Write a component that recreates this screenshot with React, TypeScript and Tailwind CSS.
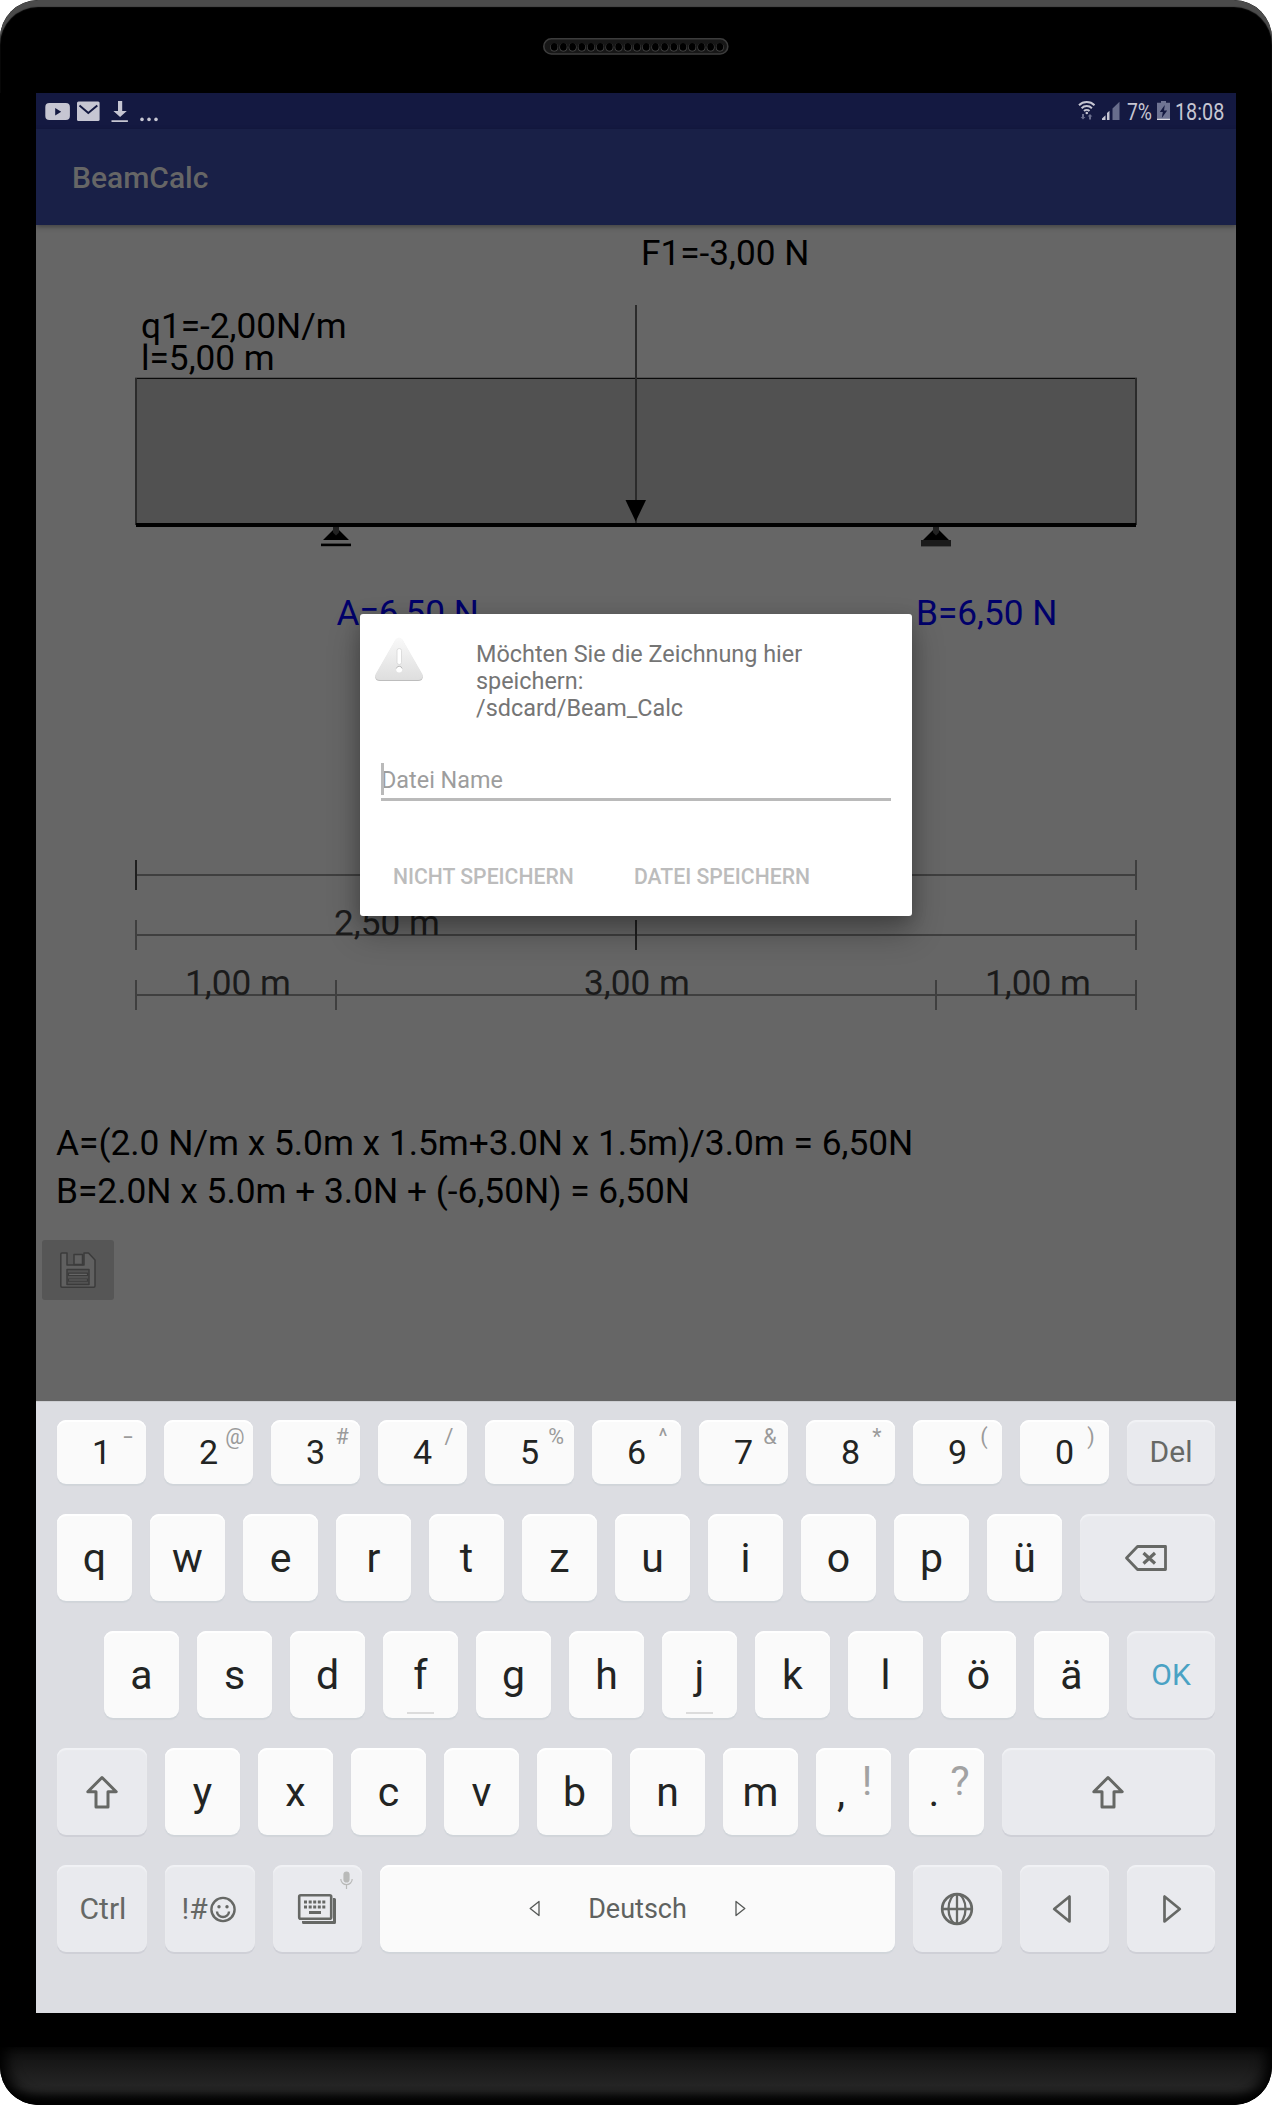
import React from "react";

const HOLES = Array.from({ length: 19 }, (_, i) => i);
const DIGITS: [string, string][] = [
  ["1", "-"], ["2", "@"], ["3", "#"], ["4", "/"], ["5", "%"],
  ["6", "^"], ["7", "&"], ["8", "*"], ["9", "("], ["0", ")"],
];
const ROW_Q = ["q", "w", "e", "r", "t", "z", "u", "i", "o", "p", "ü"];
const ROW_A = ["a", "s", "d", "f", "g", "h", "j", "k", "l", "ö", "ä"];
const ROW_Y = ["y", "x", "c", "v", "b", "n", "m"];

function Key({ className = "", fn = false, children }: { className?: string; fn?: boolean; children?: React.ReactNode }) {
  const tone = fn
    ? "bg-[#e9eaee] text-[#666865] shadow-[inset_0_2px_1px_#f1f2f5,0_2px_0_#cfd0d7]"
    : "bg-[#fafafa] text-[#222423] shadow-[inset_0_2px_1px_#ffffff,0_1px_0_#d0d5da,0_2px_1px_#d2d5da]";
  return (
    <div className={`relative flex h-full shrink-0 items-center justify-center rounded-[9px] leading-none ${tone} ${className}`}>
      {children}
    </div>
  );
}

function Letter({ c }: { c: string }) {
  return (
    <Key className="w-[75px] pt-[2px] text-[41px]">
      {c}
      {(c === "f" || c === "j") && <span className="absolute bottom-[4px] h-[2px] w-[27px] bg-[#dcdcdc]" />}
    </Key>
  );
}

function ShiftIcon() {
  return (
    <svg className="mr-px" width="34" height="34" viewBox="0 0 34 34" fill="none" stroke="#666865" strokeWidth="3" strokeLinejoin="round">
      <path d="M17 2.5 31.2 16.8H23V32H11V16.8H2.8Z" />
    </svg>
  );
}

function StatusBar() {
  return (
    <div className="flex h-9 items-center justify-between bg-[#141941] pl-[9px] pr-3 text-[#c6c6d2]">
      <svg width="116" height="36" viewBox="0 0 116 36" fill="#c6c6d2">
        <rect x="0.3" y="10" width="24.6" height="17" rx="4" />
        <path d="M10.2 15v7.4l6-3.7Z" fill="#141941" />
        <rect x="32" y="8.5" width="22.6" height="19.5" rx="1.5" />
        <path d="M34.5 12.5 43.3 20l9-7.5" fill="none" stroke="#141941" strokeWidth="2" />
        <path d="M73 8h4.2v10h4.6l-6.7 6-6.7-6H73ZM66.5 27.2h16.4v1.8H66.5Z" />
        <circle cx="97" cy="26.4" r="1.8" /><circle cx="104" cy="26.4" r="1.8" /><circle cx="111" cy="26.4" r="1.8" />
      </svg>
      <div className="flex items-center">
        <svg width="44" height="36" viewBox="0 0 44 36" fill="none">
          <g stroke="#c6c6d2" strokeWidth="2">
            <path d="M1 12.2a11 11 0 0 1 15.500 0M3.600 15.200a7.400 7.400 0 0 1 10.300 0M6 18a4 4 0 0 1 5.500 0" />
          </g>
          <circle cx="8.8" cy="20" r="1.3" fill="#c6c6d2" />
          <path d="M4 21h2v3h1.400L5 26.500 2.600 24H4ZM11 26.500h2v-3h1.400L12 21l-2.400 2.500H11Z" fill="#6b6f8e" />
          <path d="M24 27v-1.500l3.500-3.200V27ZM29 27v-7l2.500-2.300V27Z" fill="#c6c6d2" />
          <path d="M34.500 27V15.500l7-6.800V27Z" fill="#686d8c" />
        </svg>
        <span className="ml-[5px] w-[27px] origin-left scale-x-[0.84] whitespace-nowrap pt-[3px] text-[23px] leading-[33px]">7%</span>
        <svg className="ml-[3px] mr-[5px]" width="13" height="36" viewBox="0 0 13 36">
          <path d="M4 8h5v1.800h4V27H0V9.800h4Z" fill="#6f7493" />
          <path d="M7.800 12 2.800 19h3L4.800 25 10.200 17.500H7Z" fill="#141941" />
          <path d="M0 25.800h13V27H0Z" fill="#d8d8e0" />
        </svg>
        <span className="w-[49px] origin-left scale-x-[0.86] whitespace-nowrap pt-[3px] text-[23px] leading-[33px]">18:08</span>
      </div>
    </div>
  );
}

function BeamDiagram() {
  return (
    <svg className="block" width="1200" height="893" viewBox="36 225 1200 893" fontSize="35.2" fill="#000">
      <rect x="136" y="378" width="1000" height="147" fill="#515151" />
      <path d="M135 377.500H1137" stroke="#505050" />
      <path d="M135 378.500H1137" stroke="#0a0a0a" />
      <path d="M136 378V525M1136 378V525" stroke="#2b2b2b" strokeWidth="2" />
      <path d="M636 305V523" stroke="#2b2b2b" strokeWidth="2" />
      <path d="M625.500 500H646L635.700 521.500Z" />
      <path d="M136 525H1136" stroke="#000" strokeWidth="4" />

      <path d="M336 527 323 540H349ZM936 527 923 540H949Z" />
      <path d="M333 527h6v5.500l-3 3-3-3ZM933 527h6v5.500l-3 3-3-3Z" fill="#222" />
      <rect x="321" y="543.600" width="30" height="2.600" />
      <rect x="921" y="540" width="30" height="6.400" fill="#1b1b1b" />

      <g stroke="#3f3f3f" strokeWidth="2">
        <path d="M136 875H1136M136 935H1136M136 995H1136" />
        <path d="M1136 860V890M136 920V950M1136 920V950M136 980V1010M336 980V1010M936 980V1010M1136 980V1010" />
        <path d="M136 860V890M636 920V950" stroke="#1f1f1f" />
      </g>

      <text x="641" y="265">F1=-3,00 N</text>
      <text x="141" y="338">q1=-2,00N/m</text>
      <text x="141" y="370">l=5,00 m</text>
      <g fill="#00006a">
        <text x="336.500" y="625">A=6,50 N</text>
        <text x="916" y="625">B=6,50 N</text>
      </g>
      <g fill="#1b1b1b">
        <text x="334" y="935">2,50 m</text>
        <text x="185" y="995">1,00 m</text>
        <text x="584" y="995">3,00 m</text>
        <text x="985" y="995">1,00 m</text>
      </g>
    </svg>
  );
}

function Dialog() {
  return (
    <div className="absolute left-[324px] top-[521px] flex h-[302px] w-[552px] flex-col rounded-[3px] bg-white shadow-[0_16px_32px_rgba(0,0,0,0.3),0_4px_16px_rgba(0,0,0,0.16)]">
      <div className="flex h-[123px] pl-[14px] pt-[23px]">
        <svg width="50" height="46" viewBox="0 0 50 46">
          <defs>
            <linearGradient id="warn" x1="0" y1="0" x2="0" y2="1">
              <stop offset="0" stopColor="#f9f9f9" />
              <stop offset="1" stopColor="#dedede" />
            </linearGradient>
          </defs>
          <path d="M21.500 3.500Q25 -.5 28.500 3.500L48.300 38Q50 43.500 44 44H6Q0 43.500 1.700 38Z" fill="#bdbdbd" />
          <path d="M21.500 2.500Q25 -1.500 28.500 2.500L48.300 37Q50 42.500 44 43H6Q0 42.500 1.700 37Z" fill="url(#warn)" />
          <rect x="23" y="11.500" width="4.500" height="16" rx="2.200" fill="#fff" stroke="#d5d5d5" strokeWidth=".8" />
          <circle cx="25.200" cy="32.500" r="3" fill="#fff" />
          <path d="M22.300 31.500a3 3 0 0 1 5.800 0" fill="none" stroke="#bbb" />
        </svg>
        <p className="ml-[52px] pt-[4px] text-[23.4px] leading-[27px] text-[#757575]">
          Möchten Sie die Zeichnung hier<br />speichern:<br />/sdcard/Beam_Calc
        </p>
      </div>
      <div className="relative mx-[21px] mt-[21px] h-[43px] border-b-[3px] border-[#bababa]">
        <span className="absolute left-0 top-[5px] h-8 w-[3px] bg-[#bababa]" />
        <span className="block pt-[9px] text-[23.4px] leading-[27px] text-[#9d9d9d]">Datei Name</span>
      </div>
      <div className="mt-[63px] flex pl-[33px] text-[21.2px] font-medium leading-[26px] text-[#bcbcbc]">
        <span className="w-[241px]">NICHT SPEICHERN</span>
        <span>DATEI SPEICHERN</span>
      </div>
    </div>
  );
}

function Keyboard() {
  return (
    <div className="flex h-[612px] flex-col gap-[30px] border-t border-[#cdced2] bg-[#dcdde2] pl-[21px] pt-[18px]">
      <div className="flex h-[64px] gap-[18px]">
        {DIGITS.map(([d, s]) => (
          <Key key={d} className="w-[89px] text-[34px]">
            {d}
            <span className={`absolute left-[51px] top-[5px] w-10 text-center text-[21.500px] leading-6 text-[#9b9b9b] ${s === "-" ? "scale-x-[1.6]" : ""}`}>{s}</span>
          </Key>
        ))}
        <Key fn className="w-[88px] text-[30px]">Del</Key>
      </div>
      <div className="flex h-[87px] gap-[18px]">
        {ROW_Q.map((c) => <Letter key={c} c={c} />)}
        <Key fn className="w-[135px]">
          <svg className="mr-[3px]" width="44" height="30" viewBox="0 0 44 30" fill="none" stroke="#666865" strokeWidth="2.800" strokeLinejoin="round">
            <path d="M2.500 15 13.500 3.500H41.500V26.500H13.500Z" />
            <path d="M19.500 10 31 20.500M31 10 19.500 20.500" strokeWidth="3.200" />
          </svg>
        </Key>
      </div>
      <div className="flex h-[87px] gap-[18px] pl-[47px]">
        {ROW_A.map((c) => <Letter key={c} c={c} />)}
        <Key fn className="w-[88px] text-[30px]"><span className="text-[#4aa2c4]">OK</span></Key>
      </div>
      <div className="flex h-[87px] gap-[18px]">
        <Key fn className="w-[90px]"><ShiftIcon /></Key>
        {ROW_Y.map((c) => <Letter key={c} c={c} />)}
        {[[",", "!"], [".", "?"]].map(([c, s]) => (
          <Key key={c} className="w-[75px] pt-[2px] text-[41px]">
            <span className="mr-auto w-[50px] text-center">{c}</span>
            <span className="absolute left-[31px] top-[13px] w-10 text-center text-[#a2a2a2]">{s}</span>
          </Key>
        ))}
        <Key fn className="w-[213px]"><ShiftIcon /></Key>
      </div>
      <div className="flex h-[87px] gap-[18px]">
        <Key fn className="w-[90px] pl-[2px] text-[30px]">Ctrl</Key>
        <Key fn className="w-[90px] text-[30px]">
          !#
          <svg className="ml-px mr-[2px]" width="28" height="28" viewBox="0 0 28 28" fill="none" stroke="#666865" strokeWidth="2.400">
            <circle cx="14" cy="14.500" r="11.600" />
            <path d="M8 16.500a6 5.500 0 0 0 12 0" />
            <circle cx="10" cy="11.800" r="1.700" fill="#666865" stroke="none" />
            <circle cx="18" cy="11.800" r="1.700" fill="#666865" stroke="none" />
          </svg>
        </Key>
        <Key fn className="w-[89px]">
          <svg className="mr-px" width="40" height="32" viewBox="0 0 40 32" fill="#666865">
            <rect x="2.200" y="2.200" width="32" height="23.500" rx="1.500" fill="none" stroke="#666865" strokeWidth="2.600" />
            <path d="M36 6.500h1.500V29.500H6.500V28" fill="none" stroke="#666865" strokeWidth="3" strokeLinejoin="round" />
            {[7, 11.7, 16.2, 20.8, 25.3].map((x) => (
              <g key={x}><rect x={x} y="7.500" width="3" height="3" /><rect x={x} y="12.500" width="3" height="3" /></g>
            ))}
            <rect x="12" y="18" width="12" height="3" />
          </svg>
          <svg className="absolute left-[67px] top-[6px]" width="13" height="19" viewBox="0 0 13 19" fill="none" stroke="#b9bab9" strokeWidth="1.200">
            <rect x="3.400" y=".5" width="6.200" height="11" rx="3.100" fill="#b9bab9" stroke="none" />
            <path d="M.8 8a5.700 5.700 0 0 0 11.400 0M6.500 13.500V18" />
          </svg>
        </Key>
        <Key className="w-[515px] gap-[48px] text-[27px]">
          <svg width="11" height="17" viewBox="0 0 11 17" fill="none" stroke="#555856" strokeWidth="1.300" strokeLinejoin="round"><path d="M10 1.500V15.500L1.200 8.500Z" /></svg>
          <span className="pt-[2px] text-[#5f6260]">Deutsch</span>
          <svg width="11" height="17" viewBox="0 0 11 17" fill="none" stroke="#555856" strokeWidth="1.300" strokeLinejoin="round"><path d="M1 1.500V15.500L9.800 8.500Z" /></svg>
        </Key>
        <Key fn className="w-[89px]">
          <svg className="mr-[1px]" width="34" height="34" viewBox="0 0 34 34" fill="none" stroke="#666865" strokeWidth="2.300">
            <circle cx="17" cy="17" r="14.800" strokeWidth="2.700" />
            <ellipse cx="17" cy="17" rx="8.500" ry="14.800" />
            <path d="M17 2V32M2 17H32" />
          </svg>
        </Key>
        <Key fn className="w-[89px]">
          <svg className="mr-[5px]" width="20" height="30" viewBox="0 0 20 30" fill="none" stroke="#666865" strokeWidth="2.700" strokeLinejoin="round"><path d="M17.500 2.500V27.500L2.200 15Z" /></svg>
        </Key>
        <Key fn className="w-[88px]">
          <svg className="ml-0.5" width="20" height="30" viewBox="0 0 20 30" fill="none" stroke="#666865" strokeWidth="2.700" strokeLinejoin="round"><path d="M2.500 2.500V27.500L17.800 15Z" /></svg>
        </Key>
      </div>
    </div>
  );
}

export default function App() {
  return (
    <div className="h-[2105px] w-[1272px] bg-white font-['Roboto',sans-serif]">
      <div className="flex h-full flex-col overflow-hidden rounded-[38px] bg-black">
        <div className="flex h-[93px] shrink-0 justify-center rounded-t-[38px] pt-[38px] shadow-[inset_0_7px_1px_#4b4b4b]">
          <svg width="186" height="17" viewBox="0 0 186 17">
            <rect x=".8" y=".8" width="184" height="15.200" rx="7.600" fill="#171717" stroke="#3c3c3c" strokeWidth="1.600" />
            {HOLES.map((i) => (
              <g key={i}>
                <ellipse cx={11.2 + i * 9.2} cy="9.400" rx="3.900" ry="4.100" fill="#4c4c4c" />
                <ellipse cx={11.2 + i * 9.2} cy="8.800" rx="3.400" ry="3.900" fill="#000" />
              </g>
            ))}
          </svg>
        </div>
        <div className="relative mx-9 h-[1920px] shrink-0 bg-[#666]">
          <StatusBar />
          <div className="relative flex h-24 items-center bg-[#192047] pl-9 pt-[2px] text-[30px] font-medium leading-none text-[#666] shadow-[0_2px_5px_rgba(0,0,0,0.35)]">BeamCalc</div>
          <div className="h-[1176px]">
            <BeamDiagram />
            <div className="pl-5 pt-px text-[35.3px] leading-[48px] text-black">
              <p>A=(2.0 N/m x 5.0m x 1.5m+3.0N x 1.5m)/3.0m = 6,50N</p>
              <p>B=2.0N x 5.0m + 3.0N + (-6,50N) = 6,50N</p>
            </div>
            <div className="ml-[6px] mt-[25px] flex h-[60px] w-[72px] items-center justify-center rounded-[3px] bg-[#565656]">
              <svg width="36" height="36" viewBox="0 0 36 36" fill="none" stroke="#3b3b3b" strokeWidth="1.500" strokeLinejoin="round">
                <path fill="#606060" d="M2 1H7V13H24V1H28.500L35 8V34Q35 35.200 33.800 35.200H2Q.8 35.200 .8 34V2Q.8 1 2 1Z" />
                <path d="M14 2.500H22.500V12.500H14Z" fill="#606060" />
                <path d="M7 17.500H29V32.500H7Z" fill="#525252" />
                <path d="M8.500 21.200H27.500V23.500H8.500ZM8.500 27H27.500V29.200H8.500Z" fill="#666" strokeWidth="1.200" />
              </svg>
            </div>
          </div>
          <Keyboard />
          <Dialog />
        </div>
        <div className="h-[34px] shrink-0" />
        <div className="h-[58px] shrink-0 rounded-b-[38px] bg-[linear-gradient(to_bottom,#0d0d0d_0%,#171717_25%,#252525_68%,#222222_76%,#000000_100%)] shadow-[inset_-6px_-3px_14px_#000,inset_6px_-3px_14px_#000]" />
      </div>
    </div>
  );
}
